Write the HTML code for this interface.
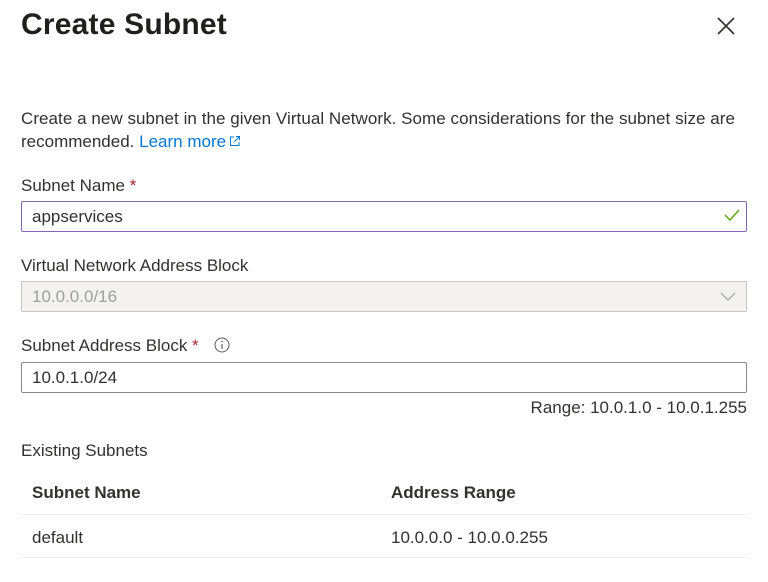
<!DOCTYPE html>
<html><head><style>
body{margin:0;width:768px;height:582px;background:#fff;font-family:"Liberation Sans",sans-serif;color:#323130;position:relative;overflow:hidden}
.a{position:absolute;white-space:nowrap;font-size:17px;line-height:20px}
h1{position:absolute;left:21px;top:6px;margin:0;font-size:30px;font-weight:bold;color:#201f1e;line-height:38px;letter-spacing:0.2px}
.box{position:absolute;left:21px;width:724px;height:29px;border:1px solid #8a8886;border-radius:2px;box-sizing:content-box}
.req{color:#a4262c}
.line{position:absolute;left:21px;width:726px;height:1px;background:#edebe9}
</style></head><body>
<h1>Create Subnet</h1>
<svg style="position:absolute;left:717px;top:17px" width="18" height="18" viewBox="0 0 18 18"><path d="M1 1L17 17M17 1L1 17" stroke="#323130" stroke-width="1.6"/></svg>
<div class="a" style="left:21px;top:109px;letter-spacing:0.05px">Create a new subnet in the given Virtual Network. Some considerations for the subnet size are</div>
<div class="a" style="left:21px;top:132px">recommended. <span style="color:#0078d4">Learn more</span><svg width="12" height="12" viewBox="0 0 12 12" style="margin-left:3px"><path d="M5 2H1.5V10.5H10V7M7 1.5H10.5V5M10.5 1.5L5.5 6.5" fill="none" stroke="#0078d4" stroke-width="1"/></svg></div>
<div class="a" style="left:21px;top:176px">Subnet Name <span class="req">*</span></div>
<div class="box" style="top:201px;border-color:#8764b8"></div>
<div class="a" style="left:32px;top:207px">appservices</div>
<svg style="position:absolute;left:724px;top:208px" width="16" height="14" viewBox="0 0 16 14"><path d="M1 7L6 12L15 2" fill="none" stroke="#57a300" stroke-width="1.4"/></svg>
<div class="a" style="left:21px;top:256px">Virtual Network Address Block</div>
<div class="box" style="top:281px;background:#f3f2f1;border-color:#c8c6c4"></div>
<div class="a" style="left:32px;top:287px;color:#a19f9d">10.0.0.0/16</div>
<svg style="position:absolute;left:720px;top:292px" width="16" height="10" viewBox="0 0 16 10"><path d="M1 1L8 8L15 1" fill="none" stroke="#a19f9d" stroke-width="1.2"/></svg>
<div class="a" style="left:21px;top:336px">Subnet Address Block <span class="req">*</span></div>
<svg style="position:absolute;left:214px;top:337px" width="16" height="16" viewBox="0 0 16 16"><circle cx="8" cy="8" r="7" fill="none" stroke="#605e5c" stroke-width="1"/><path d="M8 7V12" stroke="#605e5c" stroke-width="1.2"/><circle cx="8" cy="4.6" r="0.8" fill="#605e5c"/></svg>
<div class="box" style="top:362px"></div>
<div class="a" style="left:32px;top:368px">10.0.1.0/24</div>
<div class="a" style="right:21px;top:398px">Range: 10.0.1.0 - 10.0.1.255</div>
<div class="a" style="left:21px;top:441px">Existing Subnets</div>
<div class="a" style="left:32px;top:483px;font-weight:bold;color:#323130">Subnet Name</div>
<div class="a" style="left:391px;top:483px;font-weight:bold">Address Range</div>
<div class="line" style="top:514px"></div>
<div class="a" style="left:32px;top:528px">default</div>
<div class="a" style="left:391px;top:528px">10.0.0.0 - 10.0.0.255</div>
<div class="line" style="top:557px"></div>
</body></html>
